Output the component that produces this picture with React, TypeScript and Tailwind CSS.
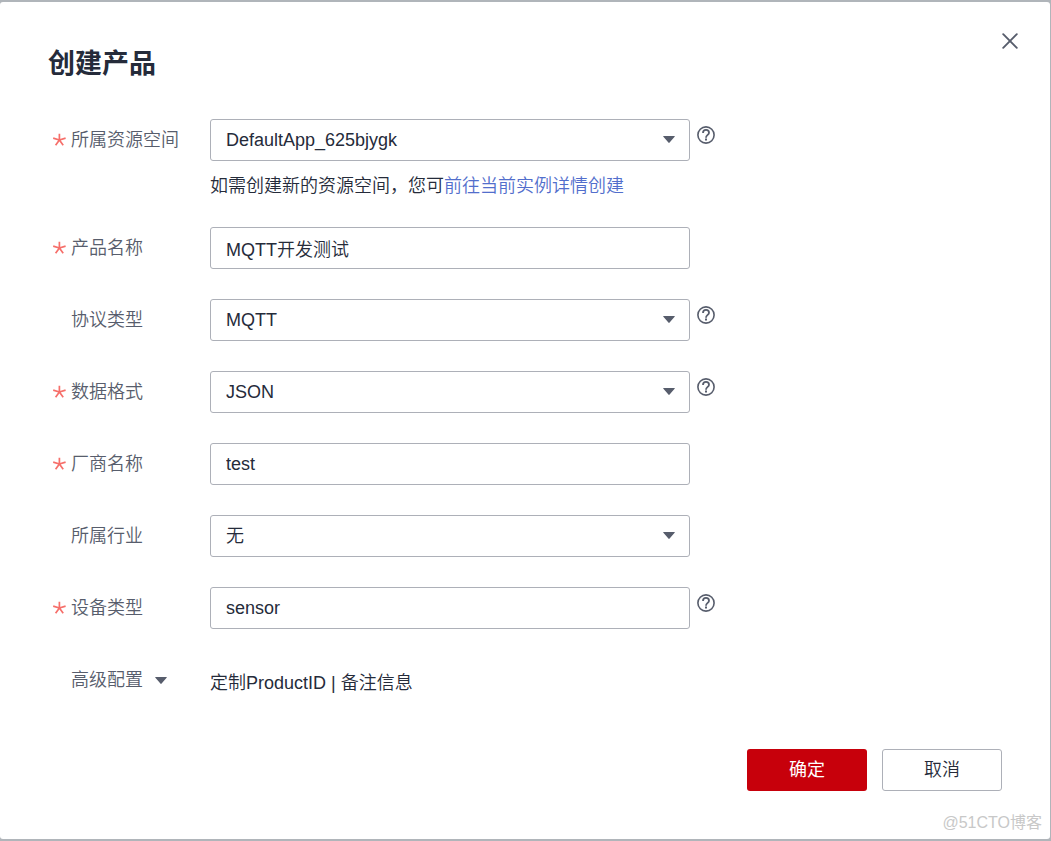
import { useState, type ReactNode } from "react";

const CONTROL =
  "block h-[42px] w-full rounded-[3px] border border-[#adb0b8] bg-white px-[15px] text-lg text-[#252b3a] outline-none focus:border-[#526ecc]";

interface FieldRowProps {
  id: string;
  label: string;
  required?: boolean;
  help?: boolean;
  hint?: ReactNode;
  children: ReactNode;
}

function RequiredMark() {
  return (
    <svg viewBox="0 0 14 14" className="size-3.5" fill="none" stroke="#f66f6a" strokeWidth="1.7" aria-hidden="true">
      <path d="M7.4 7V0.8M7.4 7L1.2 5.1M7.4 7L13.6 5.1M7.4 7L3.6 12.2M7.4 7L11.2 12.2" />
    </svg>
  );
}

function Caret({ className = "" }: { className?: string }) {
  return (
    <svg viewBox="0 0 12 7" className={`h-[7px] w-3 ${className}`} fill="#575d6c" aria-hidden="true">
      <path d="M0.6 0H11.4Q12.2 0 11.6 0.7L6.6 6.6Q6 7.2 5.4 6.6L0.4 0.7Q-0.2 0 0.6 0Z" />
    </svg>
  );
}

function HelpIcon() {
  return (
    <svg viewBox="0 0 18 18" className="size-[18px]" fill="none" stroke="#575d6c" aria-hidden="true">
      <circle cx="9" cy="9" r="8.1" strokeWidth="1.6" />
      <path d="M6 7C6 5 7.2 3.9 9 3.9S12 5 12 6.7C12 8.8 9 9 9 11.7" strokeWidth="1.8" />
      <path d="M9 12.6V14.4" strokeWidth="2" />
    </svg>
  );
}

function FieldRow({ id, label, required, help, hint, children }: FieldRowProps) {
  return (
    <div className="flex items-start">
      <div className="flex h-[42px] w-[162px] shrink-0 items-center pl-1">
        <span className="w-[19px] shrink-0">{required && <RequiredMark />}</span>
        <label htmlFor={id} className="text-lg whitespace-nowrap text-[#575d6c]">
          {label}
        </label>
      </div>
      <div className="min-w-0 max-w-[480px] flex-1">
        {children}
        {hint}
      </div>
      {help && (
        <button type="button" aria-label={`${label}说明`} className="mt-[7px] ml-[7px] shrink-0">
          <HelpIcon />
        </button>
      )}
    </div>
  );
}

function SelectBox({ id, options }: { id: string; options: string[] }) {
  return (
    <div className="relative">
      <select id={id} className={`${CONTROL} appearance-none`}>
        {options.map(o => (
          <option key={o}>{o}</option>
        ))}
      </select>
      <Caret className="pointer-events-none absolute top-[17px] right-[15px]" />
    </div>
  );
}

function TextBox({ id, initial }: { id: string; initial: string }) {
  const [value, setValue] = useState(initial);
  return <input id={id} type="text" value={value} onChange={e => setValue(e.target.value)} className={CONTROL} />;
}

export default function App() {
  return (
    <div className="flex min-h-screen bg-[#b0b5ba] pt-0.5 pr-px pb-0.5 font-['Liberation_Sans','Noto_Sans_CJK_SC',sans-serif] font-[350]">
      <div
        role="dialog"
        aria-labelledby="dialog-title"
        className="relative flex-1 rounded-[3px] bg-white px-12 pt-[42px] pb-12 text-[#252b3a]"
      >
        <button type="button" aria-label="关闭" className="absolute top-[31px] right-8">
          <svg viewBox="0 0 16 16" className="size-4" fill="none" stroke="#575d6c" strokeWidth="1.9" strokeLinecap="round">
            <path d="M1.2 1.2L14.8 14.8M14.8 1.2L1.2 14.8" />
          </svg>
        </button>

        <h1 id="dialog-title" className="text-[27px] leading-10 font-bold">
          创建产品
        </h1>

        <form onSubmit={e => e.preventDefault()}>
          <div className="mt-[35px] flex flex-col gap-[30px]">
            <FieldRow
              id="space"
              label="所属资源空间"
              required
              help
              hint={
                <p className="pt-3.5 text-lg leading-[22px]">
                  如需创建新的资源空间，您可
                  <a href="#instance" className="text-[#526ecc] hover:underline">
                    前往当前实例详情创建
                  </a>
                </p>
              }
            >
              <SelectBox id="space" options={["DefaultApp_625bjygk"]} />
            </FieldRow>

            <FieldRow id="name" label="产品名称" required>
              <TextBox id="name" initial="MQTT开发测试" />
            </FieldRow>

            <FieldRow id="protocol" label="协议类型" help>
              <SelectBox id="protocol" options={["MQTT"]} />
            </FieldRow>

            <FieldRow id="format" label="数据格式" required help>
              <SelectBox id="format" options={["JSON"]} />
            </FieldRow>

            <FieldRow id="vendor" label="厂商名称" required>
              <TextBox id="vendor" initial="test" />
            </FieldRow>

            <FieldRow id="industry" label="所属行业">
              <SelectBox id="industry" options={["无"]} />
            </FieldRow>

            <FieldRow id="device" label="设备类型" required help>
              <TextBox id="device" initial="sensor" />
            </FieldRow>

            {/* Advanced settings */}
            <div className="flex h-[42px] items-center">
              <div className="w-[162px] shrink-0 pl-[23px]">
                <button type="button" aria-expanded="false" className="flex items-center gap-3 text-lg text-[#575d6c]">
                  高级配置
                  <Caret />
                </button>
              </div>
              <p className="pt-1.5 text-lg">定制ProductID | 备注信息</p>
            </div>
          </div>

          {/* Footer */}
          <div className="mt-12 flex justify-end gap-[15px]">
            <button type="submit" className="h-[42px] w-[120px] rounded-[3px] bg-[#c7000b] text-lg font-normal text-white">
              确定
            </button>
            <button type="button" className="h-[42px] w-[120px] rounded-[3px] border border-[#adb0b8] bg-white text-lg">
              取消
            </button>
          </div>
        </form>

        <span className="absolute right-2 bottom-1 text-base font-normal text-[#c8c8c8]">@51CTO博客</span>
      </div>
    </div>
  );
}
